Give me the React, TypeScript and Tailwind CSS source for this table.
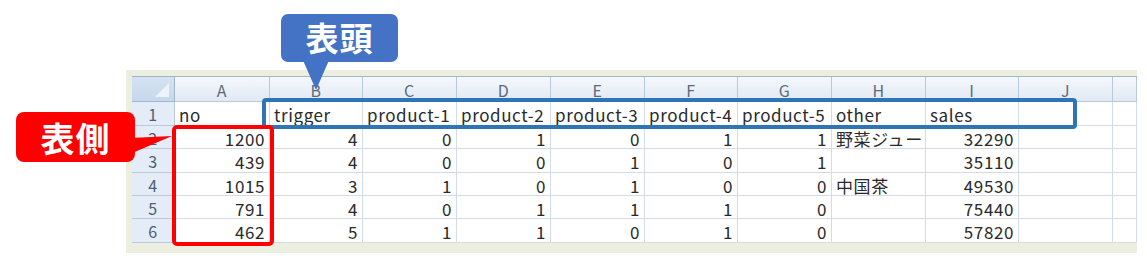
const cols = ["A", "B", "C", "D", "E", "F", "G", "H", "I", "J", ""];

const rows: (string | number)[][] = [
  ["no", "trigger", "product-1", "product-2", "product-3", "product-4", "product-5", "other", "sales", "", ""],
  [1200, 4, 0, 1, 0, 1, 1, "野菜ジュー", 32290, "", ""],
  [439, 4, 0, 0, 1, 0, 1, "", 35110, "", ""],
  [1015, 3, 1, 0, 1, 0, 0, "中国茶", 49530, "", ""],
  [791, 4, 0, 1, 1, 1, 0, "", 75440, "", ""],
  [462, 5, 1, 1, 0, 1, 0, "", 57820, "", ""],
];

const font = { fontFamily: '"Noto Sans CJK JP", "Liberation Sans", sans-serif' };

export default function App() {
  return (
    <div className="relative w-[1147px] h-[264px] bg-white overflow-hidden" style={font}>
      {/* Sheet */}
      <div className="ml-[126px] mt-[70px] w-[1011px] bg-[#eceedf] pl-[6px] pt-[6px] pb-[10px]">
        <div className="grid grid-cols-[43px_95px_93px_94px_94px_94px_93px_94px_94px_93px_94px_24px] grid-rows-[25px_24px_23px_24px_23px_23px_24px] bg-white border-t border-[#9eb6ce] text-[17px] leading-none text-[#2a2a2a] tracking-[0.6px]">
          {/* corner */}
          <div className="relative bg-gradient-to-b from-[#d6e2f2] to-[#c7d7ec] border-r border-b border-[#9eb6ce]">
            <svg className="absolute right-[5px] bottom-[4px]" width="14" height="14" viewBox="0 0 14 14">
              <polygon points="14,0 14,14 0,14" fill="#eef3fa" />
            </svg>
          </div>
          {cols.map((c, i) => (
            <div
              key={i}
              className="flex items-center justify-center pt-[2px] bg-gradient-to-b from-[#f5f8fc] to-[#e2e9f3] border-r border-b border-[#b9c9dc] text-[#5b6b7e] text-[16px]"
            >
              {c}
            </div>
          ))}
          {rows.map((r, ri) => (
            <>
              <div
                key={"h" + ri}
                className="flex items-center justify-center pt-[1px] bg-[#e4ecf7] border-r border-b border-[#b9c9dc] text-[#4f5e70] text-[16px]"
              >
                {ri + 1}
              </div>
              {r.map((v, ci) => (
                <div
                  key={ri + "-" + ci}
                  className={`flex items-center px-[4px] pt-[2px] border-r border-b border-[#d4dbe8] whitespace-nowrap overflow-hidden ${
                    typeof v === "number" ? "justify-end" : "justify-start"
                  }`}
                >
                  {v}
                </div>
              ))}
            </>
          ))}
        </div>
      </div>

      {/* Blue highlight: 表頭 */}
      <div className="absolute left-[262px] top-[98px] w-[815px] h-[31px] border-[4px] border-[#2e75b6] rounded-[4px]" />

      {/* Red highlight: 表側 */}
      <div className="absolute left-[172px] top-[125px] w-[102px] h-[121px] border-[4px] border-[#ff0000] rounded-[5px]" />

      {/* Blue callout */}
      <svg className="absolute left-[295px] top-[58px]" width="40" height="34" viewBox="0 0 40 34">
        <polygon points="7,0 35,0 21,32" fill="#4472c4" />
      </svg>
      <div className="absolute left-[281px] top-[14px] w-[117px] h-[48px] rounded-[7px] bg-[#4472c4] flex items-center justify-center text-white text-[33px] font-bold tracking-[1px]">
        表頭
      </div>

      {/* Red callout */}
      <svg className="absolute left-[130px] top-[130px]" width="44" height="28" viewBox="0 0 44 28">
        <polygon points="0,8 42,6 0,24" fill="#ff0000" />
      </svg>
      <div className="absolute left-[16px] top-[112px] w-[119px] h-[50px] rounded-[8px] bg-[#ff0000] flex items-center justify-center text-white text-[34px] font-bold tracking-[1px]">
        表側
      </div>
    </div>
  );
}
